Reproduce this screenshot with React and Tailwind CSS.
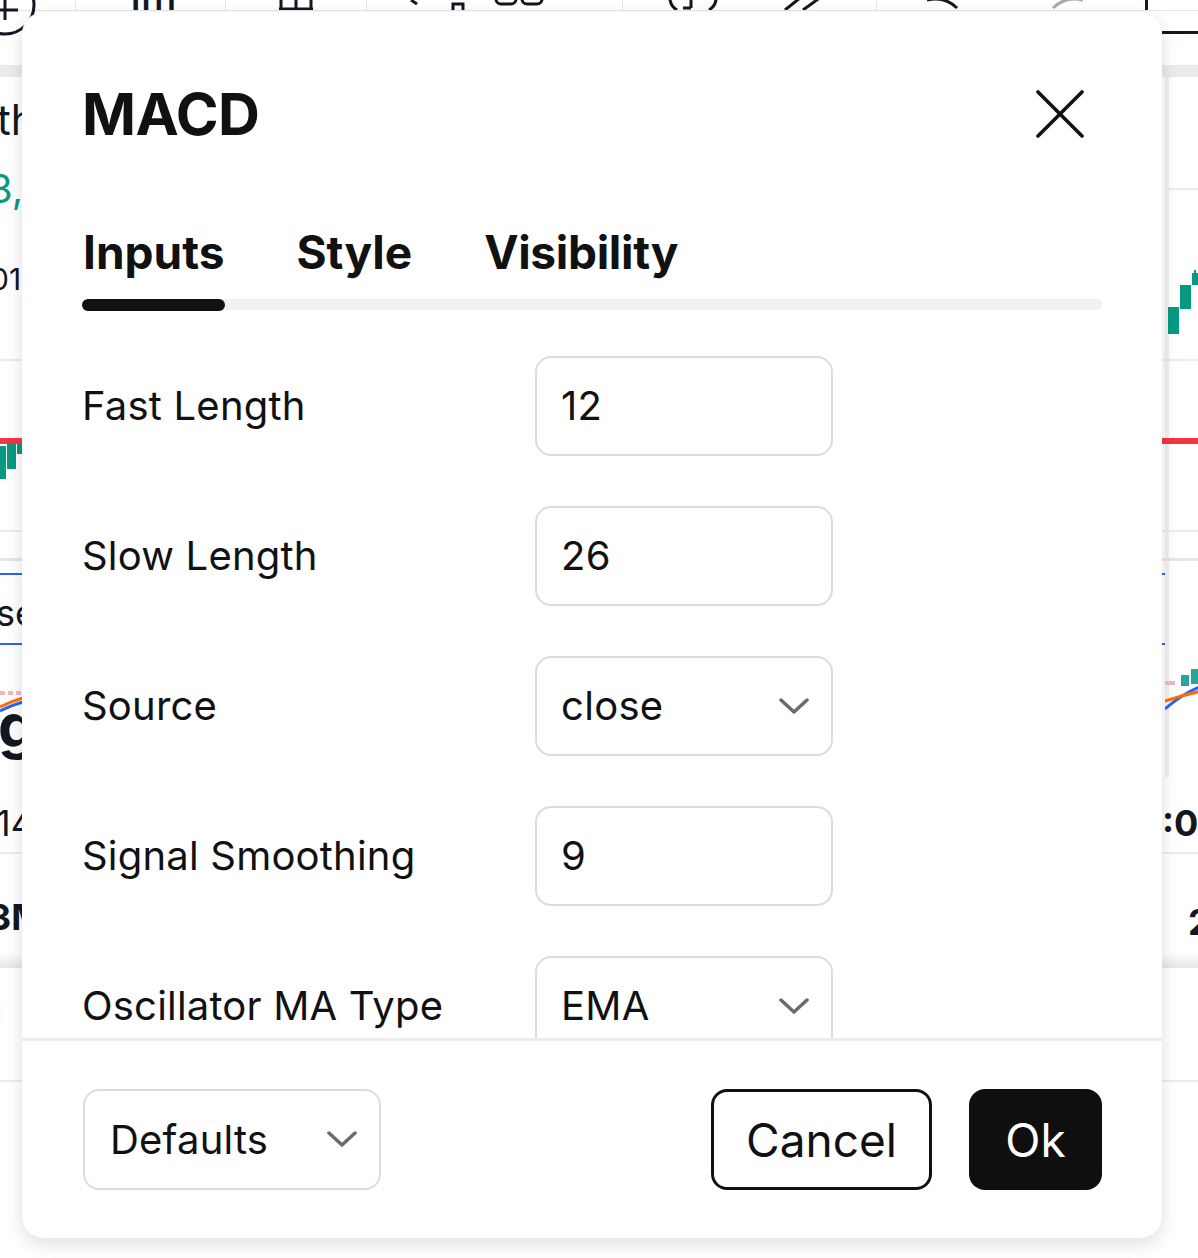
import React from "react";

function Chevron() {
  return (
    <svg width="30" height="17" viewBox="0 0 30 17" className="block shrink-0">
      <polyline points="2,2 15,14 28,2" fill="none" stroke="#6b6b6b" strokeWidth="3.5" strokeLinecap="round" strokeLinejoin="round" />
    </svg>
  );
}

function CloseIcon() {
  return (
    <svg width="48" height="48" viewBox="0 0 48 48" className="block shrink-0 mr-[18px]">
      <line x1="2" y1="2" x2="46" y2="46" stroke="#111" strokeWidth="3.6" strokeLinecap="round" />
      <line x1="46" y1="2" x2="2" y2="46" stroke="#111" strokeWidth="3.6" strokeLinecap="round" />
    </svg>
  );
}

function InputRow({ label, value, select }) {
  return (
    <div className="flex items-center h-[100px] shrink-0">
      <div className="w-[453px] text-[40px] leading-none text-[#111] tracking-[0.2px]">{label}</div>
      <div className="w-[298px] h-[100px] border-[2.5px] border-[#dcdcdc] rounded-[16px] pl-[24px] pr-[22px] flex items-center justify-between">
        <span className="text-[40px] leading-none text-[#111] tracking-[0.3px]">{value}</span>
        {select && <Chevron />}
      </div>
    </div>
  );
}

function Background() {
  return (
    <div className="flex flex-col w-full text-[#131722]">
      {/* toolbar */}
      <div className="flex h-[11px] border-b border-[#e6e6e6] shrink-0">
        <div className="w-[76px] shrink-0 border-r border-[#e6e6e6] relative">
          <svg width="70" height="70" viewBox="0 0 70 70" className="block -ml-[30px] -mt-[30px]">
            <circle cx="35" cy="35" r="29" fill="none" stroke="#131722" strokeWidth="3" />
            <line x1="22" y1="40" x2="48" y2="40" stroke="#131722" strokeWidth="3" />
            <line x1="35" y1="20" x2="35" y2="50" stroke="#131722" strokeWidth="3" />
          </svg>
        </div>
        <div className="w-[150px] shrink-0 border-r border-[#e6e6e6] flex justify-center overflow-hidden">
          <span className="text-[40px] leading-none font-medium -mt-[22px]">1m</span>
        </div>
        <div className="w-[141px] shrink-0 border-r border-[#e6e6e6] flex justify-center overflow-hidden">
          <svg width="40" height="11" viewBox="0 0 40 11" className="block">
            <line x1="5" y1="0" x2="5" y2="10" stroke="#131722" strokeWidth="3" />
            <line x1="20" y1="0" x2="20" y2="10" stroke="#131722" strokeWidth="3" />
            <line x1="35" y1="0" x2="35" y2="10" stroke="#131722" strokeWidth="3" />
            <line x1="3" y1="9" x2="37" y2="9" stroke="#131722" strokeWidth="3" />
          </svg>
        </div>
        <div className="w-[256px] shrink-0 border-r border-[#e6e6e6] flex items-start pl-[42px] gap-[50px] overflow-hidden">
          <svg width="60" height="11" viewBox="0 0 60 11" className="block">
            <line x1="2" y1="0" x2="8" y2="4" stroke="#131722" strokeWidth="3" />
            <rect x="44" y="4" width="10" height="8" fill="none" stroke="#131722" strokeWidth="3" />
          </svg>
          <svg width="52" height="11" viewBox="0 0 52 11" className="block -ml-[25px]">
            <rect x="2" y="-10" width="20" height="14" rx="5" fill="none" stroke="#131722" strokeWidth="3" />
            <rect x="28" y="-10" width="20" height="14" rx="5" fill="none" stroke="#131722" strokeWidth="3" />
          </svg>
        </div>
        <div className="w-[254px] shrink-0 border-r border-[#e6e6e6] flex items-start pl-[42px] gap-[60px] overflow-hidden">
          <svg width="56" height="11" viewBox="0 0 56 11" className="block">
            <path d="M6 -10 Q2 4 12 10" fill="none" stroke="#131722" strokeWidth="3" />
            <path d="M50 -10 Q54 4 44 10" fill="none" stroke="#131722" strokeWidth="3" />
            <line x1="26" y1="0" x2="26" y2="8" stroke="#131722" strokeWidth="3" />
            <line x1="26" y1="8" x2="18" y2="8" stroke="#131722" strokeWidth="3" />
          </svg>
          <svg width="48" height="11" viewBox="0 0 48 11" className="block">
            <line x1="4" y1="10" x2="24" y2="-6" stroke="#131722" strokeWidth="3" />
            <line x1="22" y1="10" x2="44" y2="-6" stroke="#131722" strokeWidth="3" />
          </svg>
        </div>
        <div className="w-[271px] shrink-0 border-r-[3px] border-[#131722] flex items-start pl-[46px] gap-[76px] overflow-hidden">
          <svg width="44" height="11" viewBox="0 0 44 11" className="block">
            <path d="M4 0 Q22 -4 34 8" fill="none" stroke="#131722" strokeWidth="3" />
          </svg>
          <svg width="44" height="11" viewBox="0 0 44 11" className="block">
            <path d="M40 0 Q22 -4 10 8" fill="none" stroke="#a8a8a8" strokeWidth="3" />
          </svg>
        </div>
        <div className="flex-1" />
      </div>
      {/* header strip */}
      <div className="h-[54px] shrink-0 flex justify-end">
        <div className="w-[36px] h-[3px] mt-[20px] bg-[#131722]" />
      </div>
      {/* band */}
      <div className="h-[12px] shrink-0 bg-[#ebebeb]" />
      {/* section 1 */}
      <div className="h-[284px] shrink-0 flex border-b-2 border-[#ececec]">
        <div className="flex-1 flex flex-col overflow-hidden">
          <div className="text-[42px] leading-none mt-[22px] -ml-[3px]">th</div>
          <div className="text-[40px] leading-none mt-[28px] -ml-[12px] text-[#089981]">3,</div>
          <div className="text-[30px] leading-none mt-[55px] -ml-[10px]">01</div>
        </div>
        <div className="w-[33px] shrink-0 border-l-[4px] border-[#f0f0f0] flex flex-col">
          <div className="h-[2px] bg-[#ececec] mt-[111px]" />
          <svg width="33" height="70" viewBox="0 0 33 70" className="block mt-[80px] -ml-[4px]">
            <rect x="3" y="37" width="11" height="27" fill="#089981" />
            <rect x="15" y="15" width="11" height="24" fill="#089981" />
            <rect x="27" y="3" width="8" height="12" fill="#089981" />
            <line x1="30" y1="-2" x2="30" y2="4" stroke="#089981" strokeWidth="2" />
          </svg>
        </div>
      </div>
      {/* section 2 */}
      <div className="h-[171px] shrink-0 flex border-b-2 border-[#ececec]">
        <div className="flex-1 flex flex-col">
          <div className="h-[6px] bg-[#f23645] mt-[77px]" />
          <svg width="24" height="40" viewBox="0 0 24 40" className="block">
            <rect x="0" y="2" width="6" height="33" fill="#089981" />
            <rect x="7" y="0" width="9" height="25" fill="#089981" />
            <rect x="17" y="-4" width="5" height="14" fill="#089981" />
          </svg>
        </div>
        <div className="w-[33px] shrink-0 border-l-[4px] border-[#f0f0f0] flex flex-col">
          <div className="h-[6px] bg-[#f23645] mt-[77px] -ml-[4px]" />
        </div>
      </div>
      {/* section 3 */}
      <div className="h-[29px] shrink-0 flex border-b-[3px] border-[#e6e6e6]">
        <div className="flex-1" />
        <div className="w-[33px] shrink-0 border-l-[4px] border-[#f0f0f0]" />
      </div>
      {/* section 4a */}
      <div className="h-[216px] shrink-0 flex">
        <div className="flex-1 flex flex-col overflow-hidden">
          <div className="h-[2px] bg-[#2962ff] mt-[12px]" />
          <div className="text-[36px] leading-none mt-[20px] -ml-[4px]">se</div>
          <div className="h-[2px] bg-[#2962ff] mt-[12px]" />
          <div className="flex flex-col mt-[44px]">
            <svg width="26" height="24" viewBox="0 0 26 24" className="block">
              <line x1="0" y1="4" x2="24" y2="4" stroke="#f5b5c0" strokeWidth="4" strokeDasharray="5 3" />
              <path d="M0 18 Q12 12 26 8" fill="none" stroke="#ff6d00" strokeWidth="3" />
              <path d="M0 22 Q12 16 26 12" fill="none" stroke="#2962ff" strokeWidth="3" />
            </svg>
            <div className="text-[60px] font-bold leading-none -mt-[18px] -ml-[2px]">g</div>
          </div>
        </div>
        <div className="w-[33px] shrink-0 border-l-[4px] border-[#f0f0f0] flex flex-col">
          <svg width="37" height="60" viewBox="0 0 37 60" className="block mt-[108px] -ml-[4px]">
            <line x1="0" y1="14" x2="10" y2="14" stroke="#f5b5c0" strokeWidth="4" />
            <rect x="16" y="6" width="8" height="11" fill="#26a69a" />
            <rect x="26" y="0" width="10" height="15" fill="#26a69a" />
            <path d="M0 40 Q18 24 37 17" fill="none" stroke="#2962ff" strokeWidth="3" />
            <path d="M0 32 Q18 26 37 22" fill="none" stroke="#ff6d00" strokeWidth="3" />
          </svg>
        </div>
      </div>
      {/* section 4b */}
      <div className="h-[77px] shrink-0 flex border-b-2 border-[#ececec]">
        <div className="flex-1 flex flex-col">
          <div className="text-[36px] leading-none mt-[28px] -ml-[4px]">14</div>
        </div>
        <div className="w-[36px] shrink-0 flex flex-col">
          <div className="text-[36px] font-bold leading-none mt-[28px]">:0</div>
        </div>
      </div>
      {/* section 5 */}
      <div className="h-[114px] shrink-0 flex flex-col">
        <div className="flex flex-1">
          <div className="flex-1 flex flex-col">
            <div className="text-[36px] font-bold leading-none mt-[45px] -ml-[12px]">3M</div>
          </div>
          <div className="w-[36px] shrink-0 flex flex-col pl-[26px]">
            <div className="text-[36px] font-bold leading-none mt-[50px]">2</div>
          </div>
        </div>
        <div className="h-[16px] bg-linear-to-b from-white to-[#e6e6e6]" />
      </div>
      {/* section 6 */}
      <div className="h-[114px] shrink-0 flex border-b-2 border-[#ececec]">
        <div className="flex-1 flex flex-col">
          <div className="text-[30px] leading-none mt-[30px] -ml-[10px]">1</div>
        </div>
      </div>
    </div>
  );
}

export default function App() {
  return (
    <div className="relative w-[1198px] h-[1258px] overflow-hidden bg-white font-['Inter','Noto_Sans',sans-serif]">
      <Background />
      <div className="absolute left-[22px] top-[12px] w-[1140px] h-[1226px] bg-white rounded-[22px] shadow-[0_6px_18px_rgba(0,0,0,0.13)] flex flex-col overflow-hidden text-[#111]">
        <div className="pl-[60px] pr-[60px] flex flex-col shrink-0">
          <div className="h-[204px] flex items-center justify-between">
            <h1 className="text-[58px] font-bold leading-none tracking-[-0.6px]">MACD</h1>
            <CloseIcon />
          </div>
          <div className="h-[72px] flex items-center gap-[72px] pl-[1px]">
            <span className="text-[46px] font-bold leading-none">Inputs</span>
            <span className="text-[46px] font-bold leading-none">Style</span>
            <span className="text-[46px] font-bold leading-none tracking-[-0.3px]">Visibility</span>
          </div>
          <div className="mt-[11px] h-[11px] bg-[#f1f1f1] rounded-full flex">
            <div className="w-[143px] h-[12px] bg-[#111] rounded-full" />
          </div>
        </div>
        <div className="h-[728px] shrink-0 overflow-hidden pl-[60px] pt-[46px] flex flex-col gap-[50px]">
          <InputRow label="Fast Length" value="12" />
          <InputRow label="Slow Length" value="26" />
          <InputRow label="Source" value="close" select />
          <InputRow label="Signal Smoothing" value="9" />
          <InputRow label="Oscillator MA Type" value="EMA" select />
        </div>
        <div className="flex-1 border-t-[3px] border-[#ececec] flex items-center justify-between pl-[61px] pr-[60px]">
          <div className="w-[298px] h-[101px] border-[2.5px] border-[#dcdcdc] rounded-[16px] pl-[25px] pr-[22px] flex items-center justify-between">
            <span className="text-[40px] leading-none tracking-[0.2px]">Defaults</span>
            <Chevron />
          </div>
          <div className="flex items-center gap-[37px]">
            <div className="w-[221px] h-[101px] border-[3px] border-[#111] rounded-[16px] flex items-center justify-center">
              <span className="text-[46px] leading-none">Cancel</span>
            </div>
            <div className="w-[133px] h-[101px] bg-[#0f0f0f] rounded-[16px] flex items-center justify-center">
              <span className="text-[46px] leading-none text-white">Ok</span>
            </div>
          </div>
        </div>
      </div>
    </div>
  );
}
